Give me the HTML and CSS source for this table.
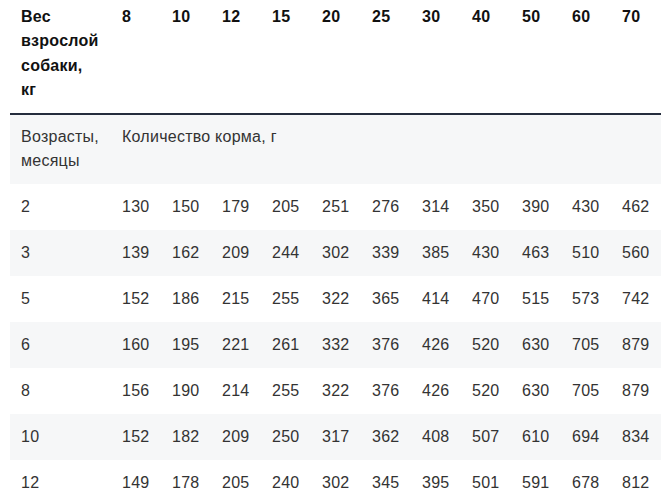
FILE: index.html
```html
<!DOCTYPE html>
<html lang="ru">
<head>
<meta charset="utf-8">
<link rel="stylesheet" href="styles.css">
</head>
<body>
<table class="feed">
  <colgroup>
    <col class="c-first">
    <col class="c-num"><col class="c-num"><col class="c-num"><col class="c-num"><col class="c-num"><col class="c-num"><col class="c-num"><col class="c-num"><col class="c-num"><col class="c-num"><col class="c-num">
  </colgroup>
  <thead>
    <tr>
      <th>Вес взрослой собаки, кг</th>
      <th>8</th><th>10</th><th>12</th><th>15</th><th>20</th><th>25</th><th>30</th><th>40</th><th>50</th><th>60</th><th>70</th>
    </tr>
  </thead>
  <tbody>
    <tr class="alt">
      <td>Возрасты, месяцы</td>
      <td colspan="11">Количество корма, г</td>
    </tr>
    <tr><td>2</td><td>130</td><td>150</td><td>179</td><td>205</td><td>251</td><td>276</td><td>314</td><td>350</td><td>390</td><td>430</td><td>462</td></tr>
    <tr class="alt"><td>3</td><td>139</td><td>162</td><td>209</td><td>244</td><td>302</td><td>339</td><td>385</td><td>430</td><td>463</td><td>510</td><td>560</td></tr>
    <tr><td>5</td><td>152</td><td>186</td><td>215</td><td>255</td><td>322</td><td>365</td><td>414</td><td>470</td><td>515</td><td>573</td><td>742</td></tr>
    <tr class="alt"><td>6</td><td>160</td><td>195</td><td>221</td><td>261</td><td>332</td><td>376</td><td>426</td><td>520</td><td>630</td><td>705</td><td>879</td></tr>
    <tr><td>8</td><td>156</td><td>190</td><td>214</td><td>255</td><td>322</td><td>376</td><td>426</td><td>520</td><td>630</td><td>705</td><td>879</td></tr>
    <tr class="alt"><td>10</td><td>152</td><td>182</td><td>209</td><td>250</td><td>317</td><td>362</td><td>408</td><td>507</td><td>610</td><td>694</td><td>834</td></tr>
    <tr><td>12</td><td>149</td><td>178</td><td>205</td><td>240</td><td>302</td><td>345</td><td>395</td><td>501</td><td>591</td><td>678</td><td>812</td></tr>
  </tbody>
</table>
</body>
</html>
```
FILE: styles.css
```css
html, body {
  margin: 0;
  padding: 0;
  background: #ffffff;
}
body {
  font-family: "Liberation Sans", Arial, sans-serif;
  font-size: 16px;
  color: #333333;
  padding-left: 10px;
}
.feed {
  border-collapse: collapse;
  table-layout: fixed;
  width: 651px;
  letter-spacing: 0.25px;
}
.c-first { width: 101px; }
.c-num { width: 50px; }
.feed th, .feed td {
  text-align: left;
  vertical-align: top;
  line-height: 24.4px;
  padding: 11px 11px;
}
.feed th {
  font-weight: bold;
  color: #111111;
  padding-top: 5px;
  padding-bottom: 10px;
  vertical-align: top;
}
.feed thead tr {
  border-bottom: 2px solid #252d3d;
}
.feed td {
  padding-top: 10.8px;
  padding-bottom: 10.8px;
}
.feed tr.alt td {
  background: #f6f7f8;
}
.feed tbody tr.alt:first-child td {
  padding-top: 10.2px;
  padding-bottom: 10.2px;
}
```
